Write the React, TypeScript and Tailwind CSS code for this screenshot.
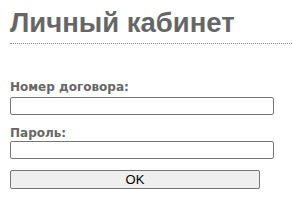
export default function App() {
  return (
    <div className="w-[292px] h-[212px] bg-white pl-[10px] overflow-hidden">
      <h1 className="mt-[7px] pb-[4px] border-b border-dotted border-[#888] text-[27.5px] leading-[32px] font-bold text-[#666]" style={{ fontFamily: '"Liberation Sans", Arial, sans-serif' }}>
        Личный кабинет
      </h1>
      <form className="mt-[36px]" style={{ fontFamily: '"DejaVu Sans", Verdana, sans-serif' }} onSubmit={(e) => e.preventDefault()}>
        <label className="block text-[12px] leading-[14px] font-bold text-[#666]">Номер договора:</label>
        <input type="text" className="block mt-[3px] w-[264px] h-[18px] border border-[#767676] rounded-[2px] bg-white" />
        <label className="block mt-[11px] text-[12px] leading-[14px] font-bold text-[#666]">Пароль:</label>
        <input type="password" className="block mt-[1px] w-[264px] h-[18px] border border-[#767676] rounded-[2px] bg-white" />
        <button type="submit" className="block mt-[11px] w-[250px] h-[19px] border border-[#767676] rounded-[2px] bg-[#efefef] text-[13px] leading-[17px] text-black" style={{ fontFamily: '"Liberation Sans", Arial, sans-serif' }}>
          OK
        </button>
      </form>
    </div>
  );
}
